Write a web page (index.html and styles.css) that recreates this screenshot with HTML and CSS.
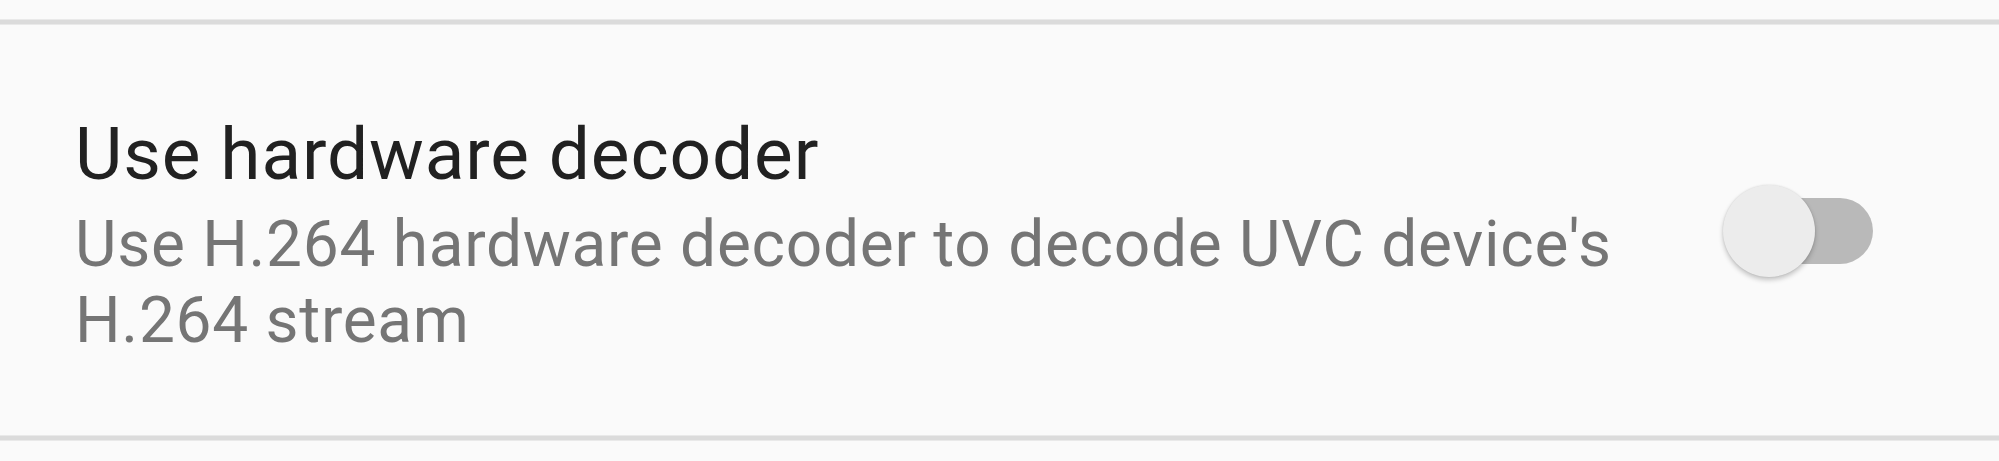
FILE: index.html
```html
<!DOCTYPE html>
<html>
<head>
    <title>Settings</title>
    <link rel="stylesheet" href="styles.css">
</head>
<body>
    <div class="settings-list">
        <div class="divider top"></div>

        <div class="pref-row">
            <div class="pref-text">
                <div class="pref-title">Use hardware decoder</div>
                <div class="pref-summary">Use H.264 hardware decoder to decode UVC device's H.264 stream</div>
            </div>
            <div class="switch" role="switch" aria-checked="false">
                <div class="switch-track"></div>
                <div class="switch-thumb"></div>
            </div>
        </div>

        <div class="divider bottom"></div>
    </div>
</body>
</html>
```

FILE: styles.css
```css
body {
    margin: 0;
    background-color: #fafafa;
    font-family: Roboto, "Noto Sans", sans-serif;
}

.settings-list {
    padding-top: 19px;
}

.divider {
    height: 6px;
    background: linear-gradient(#f0f0f0, #dbdbdb 25%, #dbdbdb 75%, #f0f0f0);
}

.pref-row {
    display: flex;
    align-items: center;
    height: 410px;
    padding: 0 126px 0 75px;
    box-sizing: border-box;
}

.pref-text {
    flex: 1;
    padding-top: 11px;
}

.pref-title {
    font-size: 73px;
    line-height: 84px;
    letter-spacing: 0.012em;
    color: #212121;
}

.pref-summary {
    margin-top: 11px;
    max-width: 1580px;
    font-size: 64px;
    line-height: 76px;
    letter-spacing: 0.011em;
    color: #757575;
}

.switch {
    position: relative;
    width: 150px;
    height: 92px;
    margin-left: 40px;
    margin-top: 2px;
}

.switch-track {
    position: absolute;
    right: 0;
    top: 13px;
    width: 137px;
    height: 66px;
    border-radius: 33px;
    background-color: #b9b9b9;
}

.switch-thumb {
    position: absolute;
    left: 0;
    top: 0;
    width: 92px;
    height: 92px;
    border-radius: 50%;
    background-color: #ececec;
    box-shadow: 0 3px 5px rgba(0, 0, 0, 0.22), 0 0 2px rgba(0, 0, 0, 0.12);
}
```
